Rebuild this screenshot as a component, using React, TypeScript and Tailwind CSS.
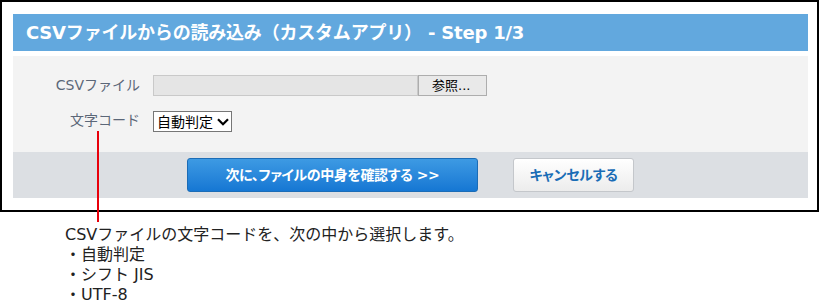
import React from "react";

const FONT = "font-['DejaVu_Sans','Noto_Sans_CJK_JP',sans-serif]";

export default function App() {
  return (
    <div className={`relative w-[821px] h-[306px] bg-white ${FONT}`}>
      <div className="w-[819px] h-[212px] border-2 border-black pt-[12px] pl-[11px] pr-[9px]">
        <div className="h-[37px] bg-[#62a8de] flex items-center pl-[13px] text-white font-bold text-[18px] whitespace-nowrap tracking-[-0.2px]">
          CSVファイルからの読み込み（カスタムアプリ）&nbsp;- Step 1/3
        </div>
        <div className="mt-[5px] h-[96px] bg-[#f3f3f3] pt-[19px] flex flex-col gap-[15px]">
          <div className="flex items-center h-[21px]">
            <div className="w-[127px] text-right text-[14px] text-[#5b6778]">CSVファイル</div>
            <div className="ml-[13px] flex h-[21px]">
              <div className="w-[265px] h-[21px] bg-[#e5e5e5] border border-[#c9c9c9]" />
              <div className="w-[69px] h-[21px] bg-[#e9e9e9] border border-[#adadad] flex items-center pl-[13px] text-[13px] text-black">
                参照...
              </div>
            </div>
          </div>
          <div className="flex items-center h-[21px]">
            <div className="w-[127px] text-right text-[14px] text-[#5b6778] -mt-[3px]">文字コード</div>
            <div className="ml-[13px] w-[79px] h-[21px] bg-white border border-[#767676] flex items-center pl-[3px] text-[14px] text-black">
              <span className="leading-none">自動判定</span>
              <svg className="ml-[4px]" width="12" height="8" viewBox="0 0 12 8">
                <path d="M1 1.2 L6 6.2 L11 1.2" fill="none" stroke="#000" strokeWidth="2.2" />
              </svg>
            </div>
          </div>
        </div>
        <div className="h-[46px] bg-[#dcdfe3] flex items-center justify-center gap-[35px]">
          <div className="w-[291px] h-[34px] rounded-[3px] border border-[#1b6cb6] bg-gradient-to-b from-[#3d9ae3] to-[#1577d3] flex items-center justify-center text-white font-bold text-[14px] [font-feature-settings:'palt'] tracking-[-0.4px] whitespace-nowrap">
            次に、ファイルの中身を確認する &gt;&gt;
          </div>
          <div className="w-[121px] h-[34px] rounded-[3px] border border-[#c4c7cb] bg-gradient-to-b from-white to-[#ececec] flex items-center justify-center text-[#1a6db6] font-bold text-[14px] [font-feature-settings:'palt'] tracking-[-0.3px] whitespace-nowrap">
            キャンセルする
          </div>
        </div>
      </div>
      <div className="absolute left-[97px] top-[131px] w-[2px] h-[91px] bg-[#e8000b]" />
      <div className="mt-[13px] ml-[65px] text-[16px] leading-[20px] text-[#222]">
        <div>CSVファイルの文字コードを、次の中から選択します。</div>
        <div>・自動判定</div>
        <div>・シフト JIS</div>
        <div>・UTF-8</div>
      </div>
    </div>
  );
}
